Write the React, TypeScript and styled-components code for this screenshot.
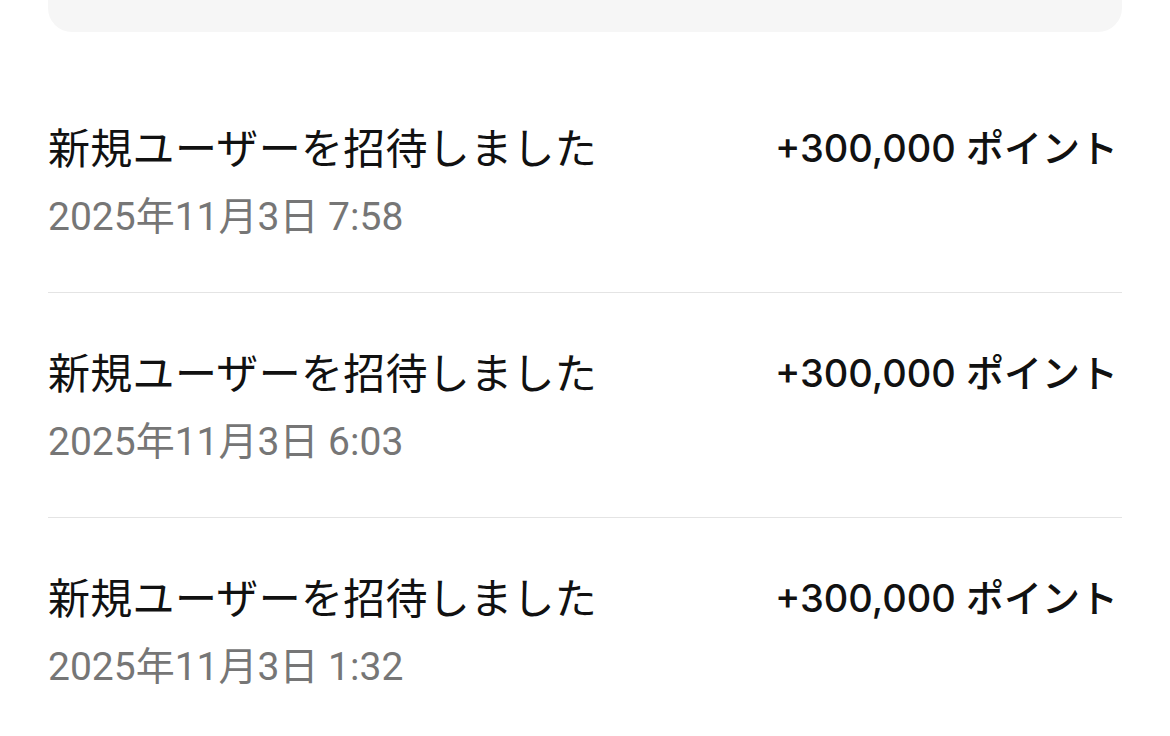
import React from "react";
import styled, { createGlobalStyle } from "styled-components";

const Global = createGlobalStyle`
  html, body { margin: 0; padding: 0; background: #ffffff; }
  body { font-family: "Noto Sans CJK JP", "Noto Sans", sans-serif; }
`;

const Page = styled.div`
  width: 1170px;
  height: 736px;
  overflow: hidden;
  padding: 0 48px;
  box-sizing: border-box;
  display: flex;
  flex-direction: column;
`;

const TopCard = styled.div`
  height: 32px;
  background: #f6f6f6;
  border-radius: 0 0 24px 24px;
  flex-shrink: 0;
`;

const List = styled.div`
  margin-top: 36px;
  display: flex;
  flex-direction: column;
`;

const Row = styled.div<{ $last?: boolean }>`
  display: flex;
  justify-content: space-between;
  align-items: flex-start;
  padding: 50px 0 47px;
  border-bottom: ${(p) => (p.$last ? "none" : "1px solid #e4e4e4")};
`;

const Info = styled.div`
  display: flex;
  flex-direction: column;
  gap: 15px;
`;

const Title = styled.div`
  font-family: "Noto Sans CJK JP", sans-serif;
  font-size: 42px;
  letter-spacing: 0.3px;
  line-height: 56px;
  color: #111111;
`;

const DateText = styled.div`
  font-family: "Roboto", "Noto Sans CJK JP", sans-serif;
  font-size: 39px;
  line-height: 56px;
  color: #767676;
`;

const Amount = styled.div`
  font-family: "Inter", "Noto Sans CJK JP", sans-serif;
  font-size: 38px;
  font-weight: 500;
  line-height: 56px;
  color: #111111;
  padding-top: 2px;
  padding-right: 4px;
`;

const items = [
  { time: "2025年11月3日 7:58" },
  { time: "2025年11月3日 6:03" },
  { time: "2025年11月3日 1:32" },
];

export default function App() {
  return (
    <>
      <Global />
      <Page>
        <TopCard />
        <List>
          {items.map((it, i) => (
            <Row key={i} $last={i === items.length - 1}>
              <Info>
                <Title>新規ユーザーを招待しました</Title>
                <DateText>{it.time}</DateText>
              </Info>
              <Amount>+300,000 ポイント</Amount>
            </Row>
          ))}
        </List>
      </Page>
    </>
  );
}
